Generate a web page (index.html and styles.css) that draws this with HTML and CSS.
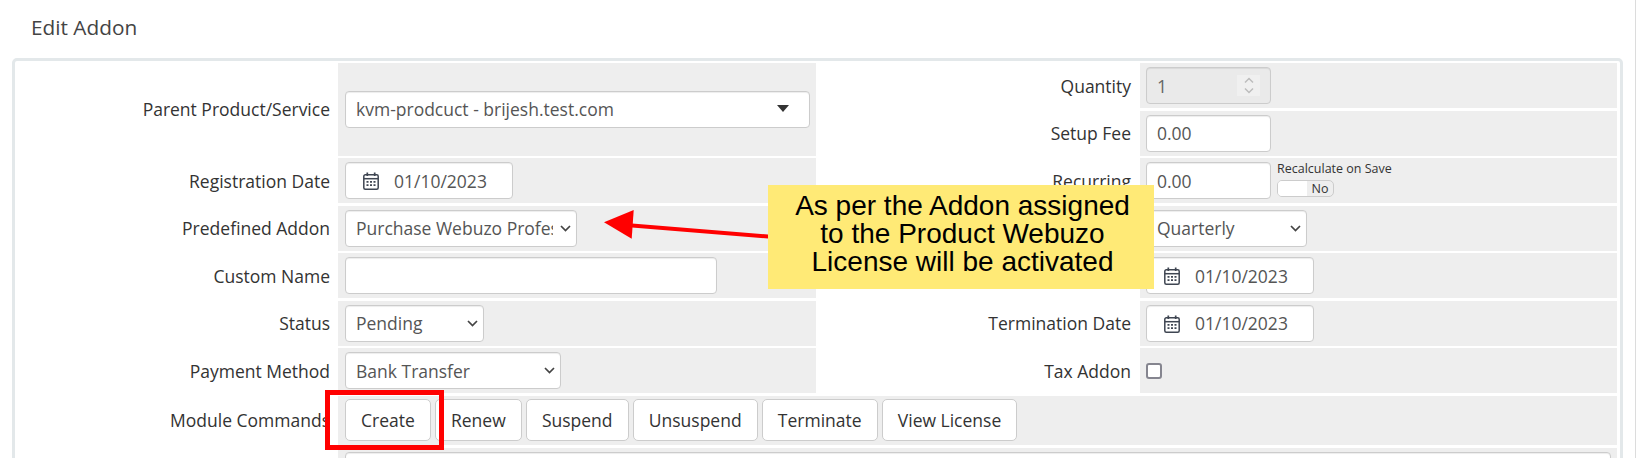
FILE: index.html
```html
<!DOCTYPE html>
<html lang="en">
<head>
<meta charset="utf-8">
<title>Edit Addon</title>
<link rel="stylesheet" href="styles.css">
</head>
<body>
<div class="page">
  <h1 class="title">Edit Addon</h1>
  <form class="panel">
    <div class="lbl lbl-l tall">Parent Product/Service</div>
    <div class="fld fld-l tall">
      <span class="sel w-parent"><select class="ctl ctl-select"><option>kvm-prodcuct - brijesh.test.com</option></select>
        <svg class="tri" width="12" height="7" viewBox="0 0 12 7"><path d="M0 0h12L6 7z" fill="#333"/></svg></span>
    </div>
    <div class="lbl lbl-r">Quantity</div>
    <div class="fld fld-r">
      <span class="qty"><input class="ctl ctl-text ctl-off w-num" type="text" value="1" disabled>
        <span class="spin"><svg width="10" height="17" viewBox="0 0 10 17"><path d="M1 5.5l4-4 4 4M1 11.5l4 4 4-4" fill="none" stroke="#bcbcbc" stroke-width="1.5"/></svg></span></span>
    </div>
    <div class="lbl lbl-r">Setup Fee</div>
    <div class="fld fld-r"><input class="ctl ctl-text w-num" type="text" value="0.00"></div>

    <div class="lbl lbl-l">Registration Date</div>
    <div class="fld fld-l">
      <span class="date"><svg class="cal" width="16" height="18" viewBox="0 0 16 18"><use href="#cal"/></svg><input class="ctl ctl-date" type="text" value="01/10/2023"></span>
    </div>
    <div class="lbl lbl-r">Recurring</div>
    <div class="fld fld-r rec">
      <input class="ctl ctl-text w-num" type="text" value="0.00">
      <div class="rec-side">
        <div class="rec-txt">Recalculate on Save</div>
        <div class="toggle"><span class="knob"></span><span class="off">No</span></div>
      </div>
    </div>

    <div class="lbl lbl-l">Predefined Addon</div>
    <div class="fld fld-l">
      <span class="sel w-addon"><select class="ctl ctl-select"><option>Purchase Webuzo Professional License</option></select><svg class="chev" width="11" height="7" viewBox="0 0 11 7"><path d="M1 1l4.5 4.5L10 1" fill="none" stroke="#444" stroke-width="1.7"/></svg></span>
    </div>
    <div class="lbl lbl-r">Billing Cycle</div>
    <div class="fld fld-r">
      <span class="sel w-cycle"><select class="ctl ctl-select"><option>Quarterly</option></select><svg class="chev" width="11" height="7" viewBox="0 0 11 7"><path d="M1 1l4.5 4.5L10 1" fill="none" stroke="#444" stroke-width="1.7"/></svg></span>
    </div>

    <div class="lbl lbl-l">Custom Name</div>
    <div class="fld fld-l"><input class="ctl ctl-text w-name" type="text"></div>
    <div class="lbl lbl-r">Next Due Date</div>
    <div class="fld fld-r">
      <span class="date"><svg class="cal" width="16" height="18" viewBox="0 0 16 18"><use href="#cal"/></svg><input class="ctl ctl-date" type="text" value="01/10/2023"></span>
    </div>

    <div class="lbl lbl-l">Status</div>
    <div class="fld fld-l">
      <span class="sel w-status"><select class="ctl ctl-select"><option>Pending</option></select><svg class="chev" width="11" height="7" viewBox="0 0 11 7"><path d="M1 1l4.5 4.5L10 1" fill="none" stroke="#444" stroke-width="1.7"/></svg></span>
    </div>
    <div class="lbl lbl-r">Termination Date</div>
    <div class="fld fld-r">
      <span class="date"><svg class="cal" width="16" height="18" viewBox="0 0 16 18"><use href="#cal"/></svg><input class="ctl ctl-date" type="text" value="01/10/2023"></span>
    </div>

    <div class="lbl lbl-l">Payment Method</div>
    <div class="fld fld-l">
      <span class="sel w-pay"><select class="ctl ctl-select"><option>Bank Transfer</option></select><svg class="chev" width="11" height="7" viewBox="0 0 11 7"><path d="M1 1l4.5 4.5L10 1" fill="none" stroke="#444" stroke-width="1.7"/></svg></span>
    </div>
    <div class="lbl lbl-r">Tax Addon</div>
    <div class="fld fld-r"><input class="check" type="checkbox"></div>

    <div class="lbl lbl-l">Module Commands</div>
    <div class="fld fld-l wide btns">
      <button class="btn" type="button">Create</button>
      <button class="btn" type="button">Renew</button>
      <button class="btn" type="button">Suspend</button>
      <button class="btn" type="button">Unsuspend</button>
      <button class="btn" type="button">Terminate</button>
      <button class="btn" type="button">View License</button>
    </div>

    <div class="lbl lbl-l"></div>
    <div class="fld fld-l wide notes"><textarea class="ctl area"></textarea></div>
  </form>

  <svg class="arrow" width="170" height="40" viewBox="0 0 170 40">
    <path d="M30 13.5L166 24.500L166 28.500L30 17.500z" fill="#f00"/>
    <path d="M2 12.300L31.700 0L29.700 28.700z" fill="#f00"/>
  </svg>
  <div class="note">As per the Addon assigned<br>to the Product Webuzo<br>License will be activated</div>
  <div class="redbox"></div>
</div>

<svg class="defs" width="0" height="0">
  <symbol id="cal" viewBox="0 0 16 18">
    <rect x="0.800" y="2.800" width="14.400" height="14.400" rx="1.500" fill="none" stroke="#3f4652" stroke-width="1.500"/>
    <path d="M0.800 6.700h14.400" stroke="#3f4652" stroke-width="1.500"/>
    <path d="M4.300 0.500v3.500M11.700 0.500v3.500" stroke="#3f4652" stroke-width="1.700"/>
    <path d="M3.500 9h2v1.700h-2zM7 9h2v1.700H7zM10.500 9h2v1.700h-2zM3.500 12.300h2V14h-2zM7 12.300h2V14H7zM10.500 12.300h2V14h-2z" fill="#3f4652"/>
  </symbol>
</svg>
</body>
</html>
```

FILE: styles.css
```css
html, body {
  margin: 0;
  height: 458px;
  overflow: hidden;
  background: #fff;
}
body {
  font-family: "Open Sans", "Liberation Sans", sans-serif;
  font-size: 17.5px;
  color: #333;
}
.page {
  position: relative;
  width: 1635px;
  height: 458px;
  box-sizing: content-box;
  border-right: 1px solid #dcdcdc;
  overflow: hidden;
}
.title {
  margin: 0 0 4px;
  padding-left: 31px;
  height: 54px;
  line-height: 54px;
  font-size: 20.800px;
  font-weight: 400;
  color: #444;
}
.panel {
  margin-left: 12px;
  width: 1611px;
  box-sizing: border-box;
  border: 3px solid #e3e8ea;
  border-radius: 5px;
  padding: 2px 3px 0 0;
  display: grid;
  grid-template-columns: 323px 478px 324px 477px;
  grid-template-rows: repeat(7, 45px) 49.5px 60px;
  row-gap: 2.5px;
}
.lbl {
  display: flex;
  align-items: center;
  justify-content: flex-end;
  white-space: nowrap;
}
.lbl-l { padding-right: 8px; }
.lbl-r { padding-right: 9px; }
.fld {
  display: flex;
  align-items: center;
  background: #eee;
}
.fld-l { padding-left: 7px; }
.fld-r { padding-left: 6px; }
.tall { grid-row: span 2; }
.wide { grid-column: span 3; }

.ctl {
  box-sizing: border-box;
  height: 37px;
  font-family: inherit;
  font-size: 17.5px;
  color: #555;
  background: #fff;
  border: 1px solid #ccc;
  border-radius: 4px;
  box-shadow: inset 0 1px 1px rgba(0,0,0,.075);
  outline: 0;
  margin: 0;
}
.ctl-text { padding: 0 10px; }
.ctl-off { background: #eaeaea; color: #666; }
.ctl-select {
  display: block;
  width: 100%;
  appearance: none;
  padding: 0 23px 0 10px;
}
.ctl-date {
  display: block;
  width: 168px;
  padding: 0 10px 0 48px;
}
.w-num { width: 125px; }
.w-name { width: 372px; }
.w-parent { width: 465px; }
.w-addon { width: 232px; }
.w-cycle { width: 161px; }
.w-status { width: 139px; }
.w-pay { width: 216px; }

.sel, .date, .qty {
  position: relative;
  display: block;
}
.chev {
  position: absolute;
  right: 6px;
  top: 15px;
  pointer-events: none;
}
.tri {
  position: absolute;
  right: 21px;
  top: 14px;
  pointer-events: none;
}
.cal {
  position: absolute;
  left: 18px;
  top: 10px;
  z-index: 1;
}
.spin {
  position: absolute;
  left: 91px;
  top: 8px;
  width: 23px;
  height: 21px;
  background: #f0f0f0;
  display: flex;
  align-items: center;
  justify-content: center;
}
.rec { gap: 6px; }
.rec-side {
  display: flex;
  flex-direction: column;
  gap: 3px;
  align-self: flex-start;
  padding-top: 3px;
}
.rec-txt {
  font-size: 12.500px;
  line-height: 16px;
  color: #333;
  white-space: nowrap;
}
.toggle {
  box-sizing: border-box;
  width: 57px;
  height: 17px;
  border: 1px solid #ccc;
  border-radius: 5px;
  display: flex;
  overflow: hidden;
  background: #eee;
  font-size: 12.500px;
  line-height: 15px;
}
.knob { width: 29px; background: #fff; }
.off { flex: 1; text-align: center; }
.check {
  appearance: none;
  box-sizing: border-box;
  width: 16px;
  height: 16px;
  margin: 0;
  background: #fff;
  border: 2px solid #85858f;
  border-radius: 3px;
}
.btns { gap: 4.200px; }
.btn {
  box-sizing: border-box;
  height: 42px;
  padding: 0 15px;
  font-family: inherit;
  font-size: 17.5px;
  color: #333;
  background: #fff;
  border: 1px solid #ccc;
  border-radius: 5px;
}
.notes { align-items: flex-start; padding-top: 4px; }
.area {
  display: block;
  width: 1266px;
  height: 60px;
  resize: none;
}
.arrow {
  position: absolute;
  left: 602px;
  top: 210px;
}
.note {
  position: absolute;
  left: 768px;
  top: 185px;
  width: 386px;
  height: 104px;
  box-sizing: border-box;
  padding: 7px 0 0 3px;
  background: #ffea76;
  color: #000;
  font-family: "Liberation Sans", Arial, sans-serif;
  font-size: 28px;
  line-height: 28px;
  text-align: center;
}
.redbox {
  position: absolute;
  left: 325px;
  top: 390px;
  width: 119px;
  height: 60px;
  box-sizing: border-box;
  border: 5px solid #f00;
}
.defs { position: absolute; }
```
